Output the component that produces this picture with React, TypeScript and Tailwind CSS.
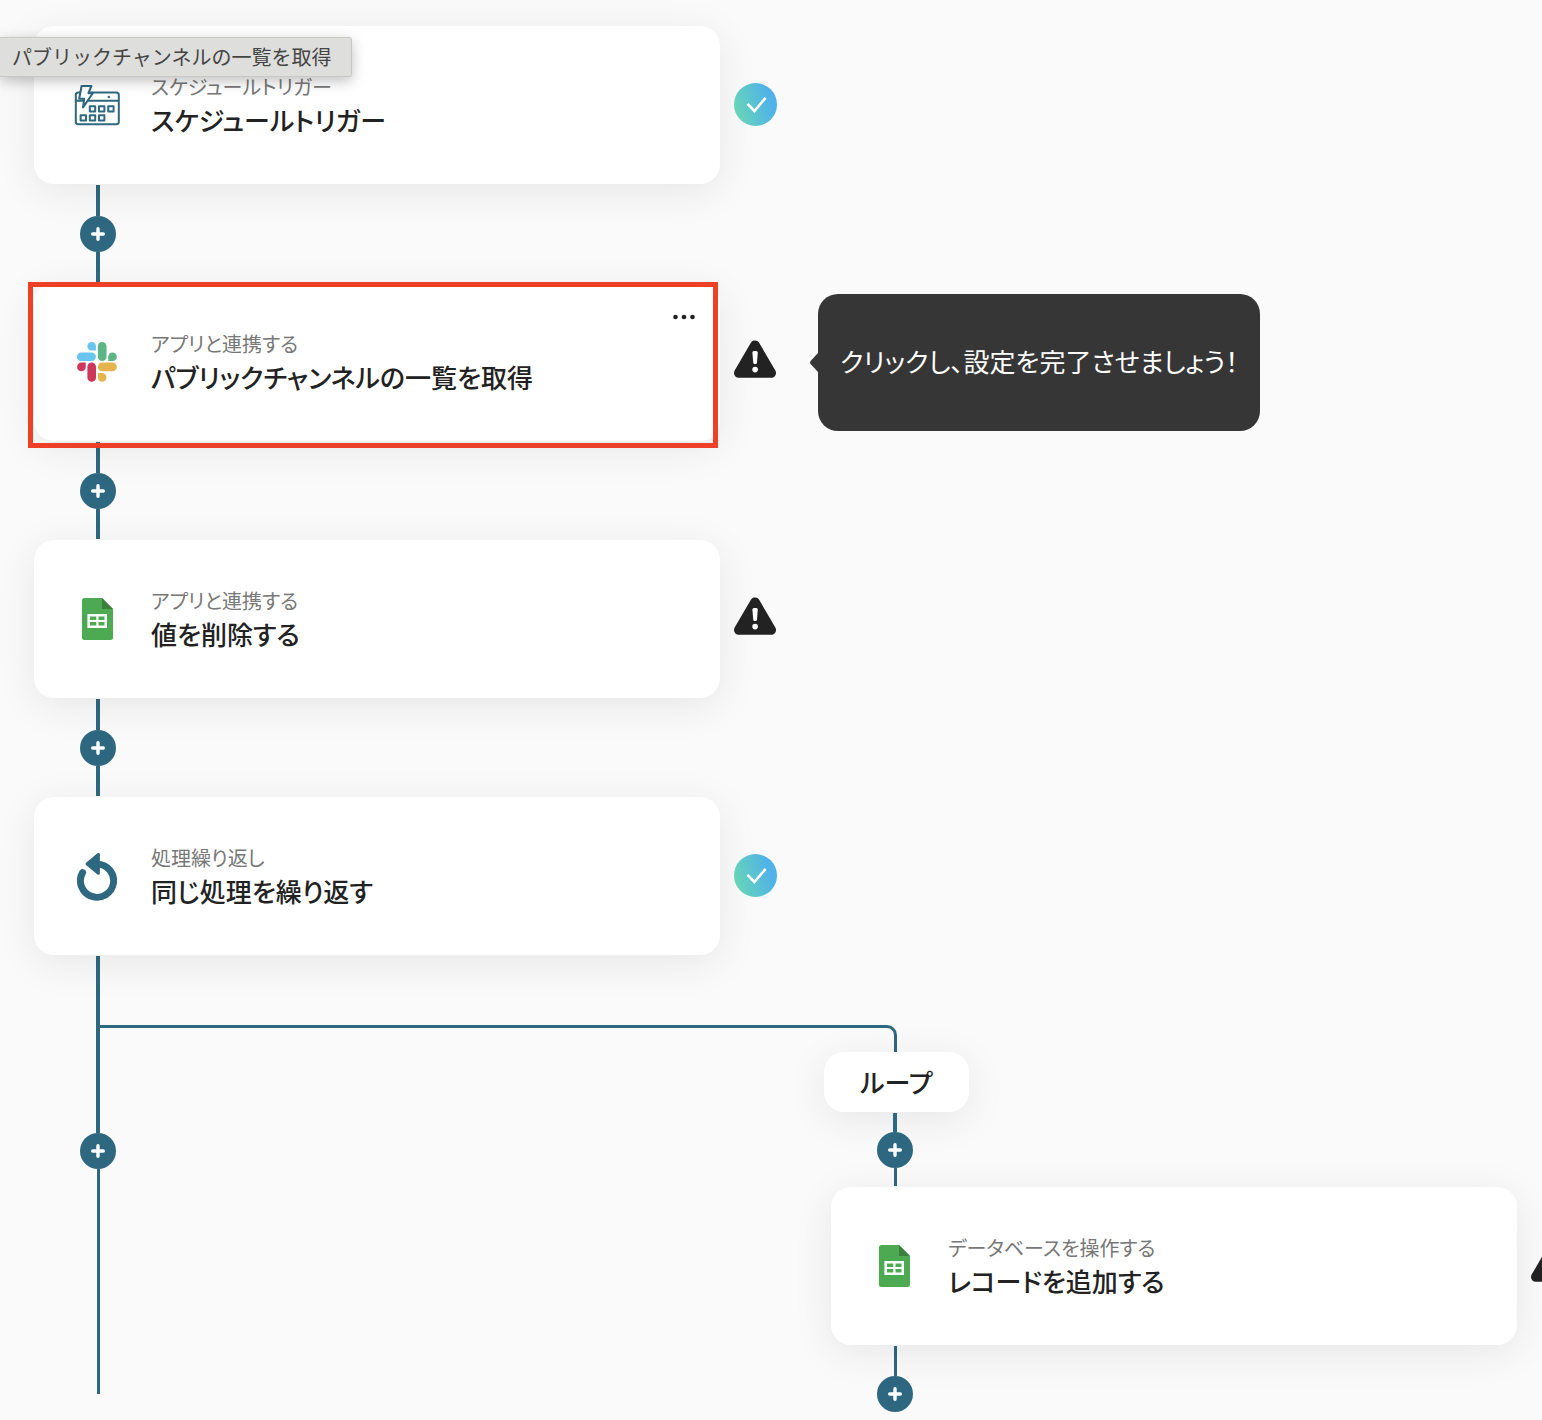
import type { ReactNode } from "react";
import clsx from "clsx";

function CalendarIcon() {
  return (
    <svg width="46" height="41" viewBox="0 0 46 41" fill="none" stroke="#2e6880" strokeWidth="2" strokeLinejoin="round">
      <rect x="1.8" y="7.6" width="43" height="31.6" rx="2.5" />
      <path d="M2 15.8h43" />
      {[15.8, 25, 34.2].map(x => <rect key={x} x={x} y="21.2" width="5.4" height="5.2" />)}
      {[6.6, 15.8, 25].map(x => <rect key={x} x={x} y="30.2" width="5.4" height="5.2" />)}
      <path d="M7.6 1h9.8l-3 7.2h4.4L9 22.4l1.2-8.6H5.2z" fill="#fff" />
      <circle cx="34.8" cy="12" r="1.2" fill="#2e6880" stroke="none" />
    </svg>
  );
}

function SlackIcon() {
  return (
    <svg width="40" height="40" viewBox="0 0 40 40">
      <path d="M14.7 0a4.2 4.2 0 0 1 4.2 4.2v4.4h-4.2a4.3 4.3 0 0 1 0-8.6z" fill="#68c5ef" />
      <rect x="0" y="10.4" width="18.9" height="8.6" rx="4.3" fill="#68c5ef" />
      <rect x="20.9" y="0" width="8.6" height="19" rx="4.3" fill="#5bb584" />
      <path d="M31.2 19v-4.3a4.3 4.3 0 1 1 4.3 4.3z" fill="#5bb584" />
      <path d="M8.7 20.6v4.3a4.3 4.3 0 1 1-4.3-4.3z" fill="#ce375c" />
      <rect x="10.4" y="20.6" width="8.6" height="19.2" rx="4.3" fill="#ce375c" />
      <rect x="20.9" y="20.6" width="18.9" height="8.6" rx="4.3" fill="#e4b54c" />
      <path d="M20.9 31.1h4.3a4.3 4.3 0 1 1-4.3 4.3z" fill="#e4b54c" />
    </svg>
  );
}

function SheetIcon() {
  return (
    <svg width="31" height="42" viewBox="0 0 31 42">
      <path d="M2.5 0H20l11 11v28.5a2.5 2.5 0 0 1-2.5 2.5h-26A2.5 2.5 0 0 1 0 39.5v-37A2.5 2.5 0 0 1 2.5 0z" fill="#4ea953" />
      <path d="M20 0l11 11H20z" fill="#3a7f3c" />
      <path
        fillRule="evenodd"
        d="M5.4 16H25v14H5.4zM8 18.4V22h6.3v-3.6zM16.5 18.4V22h6v-3.6zM8 24v3.6h6.3V24zM16.5 24v3.6h6V24z"
        fill="#fff"
      />
    </svg>
  );
}

function RepeatIcon() {
  return (
    <svg width="40" height="49" viewBox="0 0 40 49">
      <path d="M20 12.1A16.6 16.6 0 1 1 5.6 20.5" fill="none" stroke="#2e6880" strokeWidth="6.9" strokeLinecap="round" />
      <path d="M10 11.9L21.4 2.4v18.9z" fill="#2e6880" stroke="#2e6880" strokeWidth="3" strokeLinejoin="round" />
    </svg>
  );
}

function WarningIcon() {
  return (
    <svg width="42" height="38" viewBox="0 0 42 38" role="img" aria-label="設定未完了">
      <path d="M21 5.2L37.2 33H4.8z" fill="#222" stroke="#222" strokeWidth="9.6" strokeLinejoin="round" />
      <path d="M18.4 12.6q0-1.6 1.6-1.6h2.2q1.6 0 1.6 1.6l-.8 10q-.1 1.5-1.4 1.5h-1q-1.3 0-1.4-1.5z" fill="#fff" />
      <circle cx="21.1" cy="29.6" r="2.8" fill="#fff" />
    </svg>
  );
}

function CheckIcon() {
  return (
    <svg width="43" height="43" viewBox="0 0 43 43" role="img" aria-label="設定完了">
      <defs>
        <linearGradient id="check" x1="0" y1="0.65" x2="1" y2="0.35">
          <stop offset="0" stopColor="#68d6b6" />
          <stop offset="0.85" stopColor="#50b2e8" />
        </linearGradient>
      </defs>
      <circle cx="21.5" cy="21.5" r="21.5" fill="url(#check)" />
      <path d="M13.5 20.8l6.9 7.2L31.6 14.9" fill="none" stroke="#fff" strokeWidth="2.6" />
    </svg>
  );
}

const card = "bg-white shadow-[0_8px_40px_rgba(0,0,0,0.08)]";

type StepProps = {
  icon: ReactNode;
  kind: string;
  title: string;
  done?: boolean;
  selected?: boolean;
  hint?: string;
};

function Step({ icon, kind, title, done, selected, hint }: StepProps) {
  return (
    <div className="relative flex items-center">
      <div className={clsx(card, "flex w-[686px] h-[158px] shrink-0 items-center rounded-[20px] pl-10 pr-5")}>
        <div className="flex w-[46px] shrink-0 justify-center">{icon}</div>
        <div className="ml-[31px] flex-1">
          <div className="text-[20px] leading-[30px] text-[#777]">{kind}</div>
          <div className="text-[26px] leading-[36px] font-medium text-[#222]">{title}</div>
        </div>
        {selected && (
          <button aria-label="メニュー" className="mt-[26px] self-start p-1">
            <svg width="24" height="8" viewBox="0 0 24 8" fill="#222">
              <circle cx="3.5" cy="4" r="2.3" />
              <circle cx="12" cy="4" r="2.3" />
              <circle cx="20.5" cy="4" r="2.3" />
            </svg>
          </button>
        )}
      </div>
      <div className="ml-[14px] h-11 w-11 shrink-0">{done ? <CheckIcon /> : <WarningIcon />}</div>
      {hint && (
        <div className="relative ml-10 flex h-[137px] shrink-0 items-center rounded-[20px] bg-[#363636] px-[22px] pb-1 text-[26px] text-white">
          <svg className="absolute top-[59px] right-full" width="8" height="19" viewBox="0 0 8 19" fill="#363636">
            <path d="M8 0v19L.8 11.3q-1.5-1.8 0-3.6z" />
          </svg>
          {hint}
        </div>
      )}
      {selected && <div className="pointer-events-none absolute -top-px -left-[6px] h-[166px] w-[690px] border-[5px] border-[#ee4026]" />}
    </div>
  );
}

function AddButton() {
  return (
    <button aria-label="ステップを追加" className="grid size-9 shrink-0 place-items-center rounded-full bg-[#2e6880]">
      <svg width="14" height="14" viewBox="0 0 14 14" stroke="#fff" strokeWidth="3.4" strokeLinecap="round">
        <path d="M7 1.7v10.6M1.7 7h10.6" />
      </svg>
    </button>
  );
}

function Connector() {
  return (
    <div className="ml-[46px] flex h-[99px] w-9 flex-col items-center py-px">
      <div className="w-1 flex-1 bg-[#2e6880]" />
      <AddButton />
      <div className="w-1 flex-1 bg-[#2e6880]" />
    </div>
  );
}

export default function App() {
  return (
    <main className="relative min-h-screen overflow-hidden bg-[#fafafa] pt-[26px] pb-[7px] pl-[34px] font-['Noto_Sans_CJK_JP',sans-serif] [font-feature-settings:'palt']">
      <Step icon={<CalendarIcon />} kind="スケジュールトリガー" title="スケジュールトリガー" done />
      <Connector />
      <Step
        icon={<SlackIcon />}
        kind="アプリと連携する"
        title="パブリックチャンネルの一覧を取得"
        hint="クリックし、設定を完了させましょう！"
        selected
      />
      <Connector />
      <Step icon={<SheetIcon />} kind="アプリと連携する" title="値を削除する" />
      <Connector />
      <Step icon={<RepeatIcon />} kind="処理繰り返し" title="同じ処理を繰り返す" done />

      <div className="flex items-start">
        <div className="ml-[46px] flex w-9 shrink-0 flex-col items-center pt-px">
          <div className="h-[177px] w-1 bg-[#2e6880]" />
          <AddButton />
          <div className="h-[225px] w-[3px] bg-[#2e6880]" />
        </div>

        {/* loop branch */}
        <div className="-ml-4 shrink-0 pt-[70px]">
          <div className="h-[27px] w-[797px] rounded-tr-[10px] border-t-[3px] border-r-[3px] border-[#2e6880]" />
          <div className={clsx(card, "ml-[724px] flex h-[60px] w-[145px] items-center justify-center rounded-[20px] text-[26px] leading-[36px] font-medium text-[#222]")}>
            ループ
          </div>
          <div className="ml-[777px] flex w-9 flex-col items-center py-px">
            <div className="h-[19px] w-1 bg-[#2e6880]" />
            <AddButton />
            <div className="h-[18px] w-[3px] bg-[#2e6880]" />
          </div>
          <div className="ml-[731px]">
            <Step icon={<SheetIcon />} kind="データベースを操作する" title="レコードを追加する" />
          </div>
          <div className="ml-[777px] flex w-9 flex-col items-center pt-px">
            <div className="h-[30px] w-[3px] bg-[#2e6880]" />
            <AddButton />
          </div>
        </div>
      </div>

      <div
        role="tooltip"
        className="absolute top-[37px] left-0 rounded-r-[3px] border border-l-0 border-[#c8c8c7] bg-[#dededc] pr-5 pl-3 text-[20px] leading-[38px] text-[#444] shadow-[0_4px_14px_rgba(0,0,0,0.25)] [font-feature-settings:normal]"
      >
        パブリックチャンネルの一覧を取得
      </div>
    </main>
  );
}
